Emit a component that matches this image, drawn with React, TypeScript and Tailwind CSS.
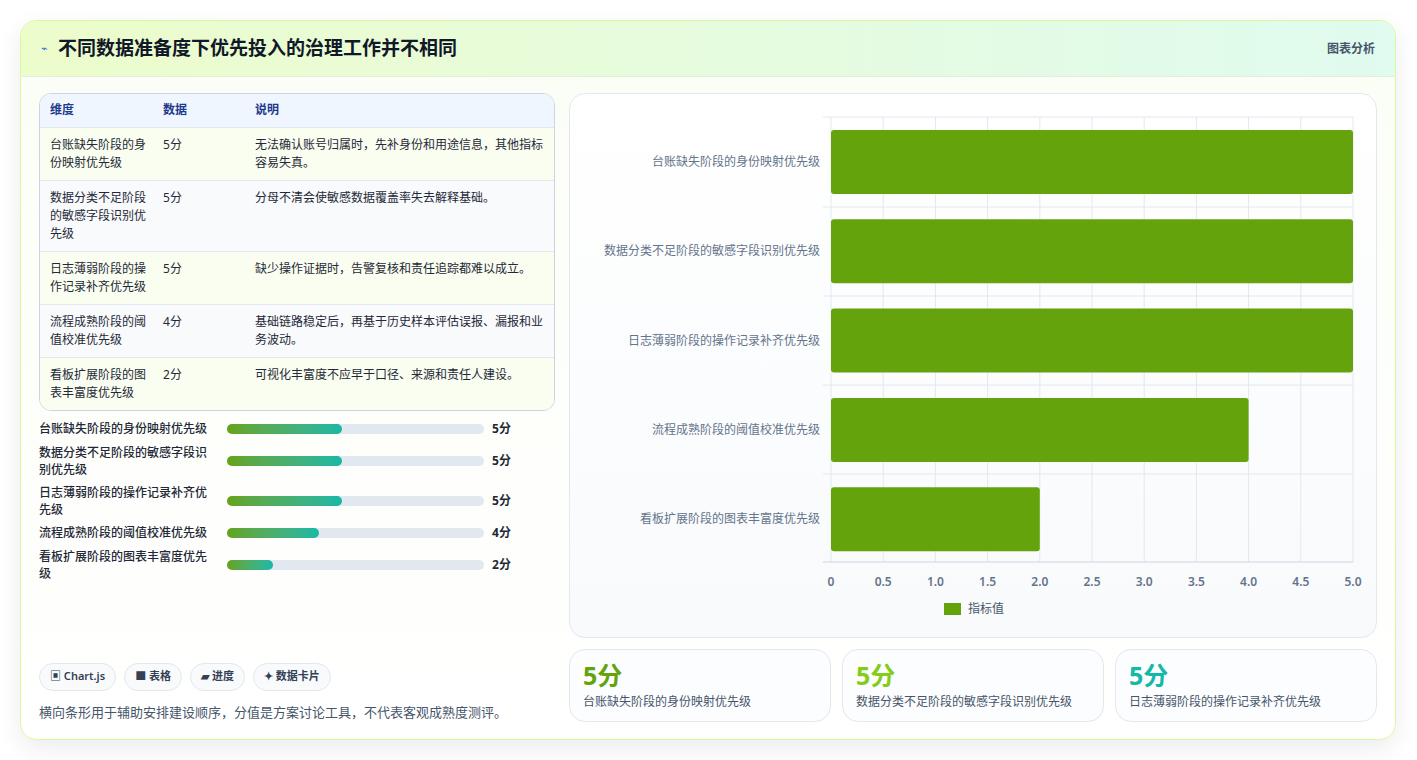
import React from 'react';

const rows = [
  { name: '台账缺失阶段的身份映射优先级', value: 5, note: '无法确认账号归属时，先补身份和用途信息，其他指标容易失真。' },
  { name: '数据分类不足阶段的敏感字段识别优先级', value: 5, note: '分母不清会使敏感数据覆盖率失去解释基础。' },
  { name: '日志薄弱阶段的操作记录补齐优先级', value: 5, note: '缺少操作证据时，告警复核和责任追踪都难以成立。' },
  { name: '流程成熟阶段的阈值校准优先级', value: 4, note: '基础链路稳定后，再基于历史样本评估误报、漏报和业务波动。' },
  { name: '看板扩展阶段的图表丰富度优先级', value: 2, note: '可视化丰富度不应早于口径、来源和责任人建设。' },
];

const font = { fontFamily: '"Noto Sans", "Noto Sans CJK SC", sans-serif' };

function Chart() {
  const x0 = 261;
  const w = 522;
  const ticks = [0, 0.5, 1, 1.5, 2, 2.5, 3, 3.5, 4, 4.5, 5];
  return (
    <svg width="806" height="542" style={font}>
      {ticks.map((t) => {
        const x = x0 + (t / 5) * w;
        return (
          <g key={t}>
            <line x1={x} y1={23} x2={x} y2={468} stroke="#e2e8f0" />
            <text x={x} y={492} textAnchor="middle" fontSize="12" fontWeight="600" fill="#64748b">
              {t === 0 ? '0' : t.toFixed(1)}
            </text>
          </g>
        );
      })}
      {[23, 113, 202, 291, 380].map((y) => (
        <line key={y} x1={x0 - 8} y1={y} x2={x0 + w} y2={y} stroke="#e2e8f0" />
      ))}
      <line x1={x0 - 8} y1={468} x2={x0 + w} y2={468} stroke="#cbd5e1" />
      {rows.map((r, i) => {
        const y = 36 + i * 89.3;
        return (
          <g key={r.name}>
            <rect x={x0} y={y} width={(r.value / 5) * w} height={64} rx={3} fill="#65a30d" />
            <text x={250} y={y + 36} textAnchor="end" fontSize="12" fill="#64748b">{r.name}</text>
          </g>
        );
      })}
      <rect x={374} y={509} width={17} height={12} fill="#65a30d" />
      <text x={398} y={519} fontSize="12" fill="#475569">指标值</text>
    </svg>
  );
}

export default function App() {
  const colors = ['text-[#65a30d]', 'text-[#84cc16]', 'text-[#14b8a6]'];
  return (
    <div className="w-[1417px] h-[760px] bg-white p-[20px]" style={font}>
      <div className="w-[1376px] h-[720px] rounded-2xl border border-[#d9f99d] bg-gradient-to-b from-[#fbfef5] to-white shadow-[0_8px_24px_rgba(0,0,0,0.08)] overflow-hidden flex flex-col">
        <div className="h-[56px] shrink-0 flex items-center justify-between px-[20px] bg-gradient-to-r from-[#ecfccb] to-[#e0fbef] border-b border-[#e5eedd]">
          <div className="flex items-center gap-[10px]">
            <span className="text-[11px] text-[#2563eb]">⌁</span>
            <h1 className="text-[19px] font-bold text-[#111827]">不同数据准备度下优先投入的治理工作并不相同</h1>
          </div>
          <span className="text-[12px] font-semibold text-[#475569]">图表分析</span>
        </div>
        <div className="flex gap-[14px] px-[18px] pt-[16px] pb-[18px] flex-1">
          <div className="w-[517px] flex flex-col">
            <div className="rounded-xl border border-[#cbd5e1] overflow-hidden">
              <table className="w-full text-[12px] border-collapse">
                <thead>
                  <tr className="bg-[#eff6ff] text-[#1e3a8a] h-[33px] text-left">
                    <th className="font-semibold pl-[10px] w-[123px]">维度</th>
                    <th className="font-semibold w-[92px]">数据</th>
                    <th className="font-semibold">说明</th>
                  </tr>
                </thead>
                <tbody>
                  {rows.map((r, i) => (
                    <tr key={r.name} className={`border-t border-[#e2e8f0] align-top ${i % 2 === 0 ? 'bg-[#f9fef0]' : 'bg-[#f8fafc]'}`}>
                      <td className="pl-[10px] pr-[8px] py-[8px] leading-[18px] text-[#1f2937]">{r.name}</td>
                      <td className="py-[8px] leading-[18px] text-[#1f2937]">{r.value}分</td>
                      <td className="py-[8px] pr-[10px] leading-[18px] text-[#1f2937]">{r.note}</td>
                    </tr>
                  ))}
                </tbody>
              </table>
            </div>
            <div className="flex flex-col gap-[6px] mt-[9px]">
              {rows.map((r) => (
                <div key={r.name} className="flex items-center">
                  <div className="w-[176px] text-[12px] leading-[17px] text-[#1f2937] font-medium">{r.name}</div>
                  <div className="ml-[12px] w-[257px] h-[10px] rounded-full bg-[#e2e8f0]">
                    <div className="h-full rounded-full bg-gradient-to-r from-[#65a30d] to-[#14b8a6]" style={{ width: `${r.value * 23}px` }} />
                  </div>
                  <div className="ml-[8px] text-[12px] font-bold text-[#1f2937]">{r.value}分</div>
                </div>
              ))}
            </div>
            <div className="mt-auto flex gap-[8px]">
              {['▣ Chart.js', '■ 表格', '▰ 进度', '✦ 数据卡片'].map((c) => (
                <span key={c} className="h-[28px] px-[10px] flex items-center rounded-full border border-[#e2e8f0] bg-[#f8fafc] text-[11px] font-semibold text-[#334155]">{c}</span>
              ))}
            </div>
            <p className="mt-[12px] text-[13px] text-[#475569]">横向条形用于辅助安排建设顺序，分值是方案讨论工具，不代表客观成熟度测评。</p>
          </div>
          <div className="flex-1 flex flex-col gap-[11px]">
            <div className="h-[545px] rounded-2xl border border-[#e2e8f0] bg-gradient-to-b from-white to-[#f8fafc]">
              <Chart />
            </div>
            <div className="grid grid-cols-3 gap-[11px]">
              {rows.slice(0, 3).map((r, i) => (
                <div key={r.name} className="h-[73px] rounded-2xl border border-[#e2e8f0] bg-[#fbfdff] px-[13px] pt-[10px]">
                  <div className={`text-[25px] leading-[30px] font-bold ${colors[i]}`}>{r.value}分</div>
                  <div className="text-[12px] text-[#475569] mt-[3px]">{r.name}</div>
                </div>
              ))}
            </div>
          </div>
        </div>
      </div>
    </div>
  );
}
